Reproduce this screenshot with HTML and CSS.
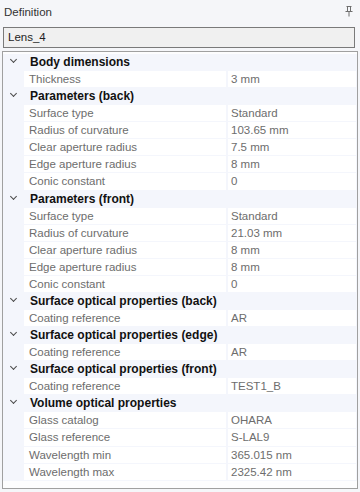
FILE: index.html
```html
<!DOCTYPE html>
<html lang="en">

<head>
  <meta charset="UTF-8">
  <meta name="viewport" content="width=device-width, initial-scale=1.0">
  <title>Definition</title>
  <link rel="stylesheet" href="styles.css">
</head>

<body>
  <main class="panel">

    <header class="panel-title">
      <span>Definition</span>
      <svg class="pin" width="8" height="11" viewBox="0 0 8 11">
        <path d="M1.5 0.5h5M2.5 0.5v5M5.5 0.5v5M0.5 5.5h7M4 5.5v5" stroke="#6f6f6f" stroke-width="1" fill="none"/>
      </svg>
    </header>

    <div class="namebox">Lens_4</div>

    <section class="grid">

      <div class="cat"><span class="chev"></span>Body dimensions</div>
      <div class="prop"><span class="name">Thickness</span><span class="val">3 mm</span></div>

      <div class="cat"><span class="chev"></span>Parameters (back)</div>
      <div class="prop"><span class="name">Surface type</span><span class="val">Standard</span></div>
      <div class="prop"><span class="name">Radius of curvature</span><span class="val">103.65 mm</span></div>
      <div class="prop"><span class="name">Clear aperture radius</span><span class="val">7.5 mm</span></div>
      <div class="prop"><span class="name">Edge aperture radius</span><span class="val">8 mm</span></div>
      <div class="prop"><span class="name">Conic constant</span><span class="val">0</span></div>

      <div class="cat"><span class="chev"></span>Parameters (front)</div>
      <div class="prop"><span class="name">Surface type</span><span class="val">Standard</span></div>
      <div class="prop"><span class="name">Radius of curvature</span><span class="val">21.03 mm</span></div>
      <div class="prop"><span class="name">Clear aperture radius</span><span class="val">8 mm</span></div>
      <div class="prop"><span class="name">Edge aperture radius</span><span class="val">8 mm</span></div>
      <div class="prop"><span class="name">Conic constant</span><span class="val">0</span></div>

      <div class="cat"><span class="chev"></span>Surface optical properties (back)</div>
      <div class="prop"><span class="name">Coating reference</span><span class="val">AR</span></div>

      <div class="cat"><span class="chev"></span>Surface optical properties (edge)</div>
      <div class="prop"><span class="name">Coating reference</span><span class="val">AR</span></div>

      <div class="cat"><span class="chev"></span>Surface optical properties (front)</div>
      <div class="prop"><span class="name">Coating reference</span><span class="val">TEST1_B</span></div>

      <div class="cat"><span class="chev"></span>Volume optical properties</div>
      <div class="prop"><span class="name">Glass catalog</span><span class="val">OHARA</span></div>
      <div class="prop"><span class="name">Glass reference</span><span class="val">S-LAL9</span></div>
      <div class="prop"><span class="name">Wavelength min</span><span class="val">365.015 nm</span></div>
      <div class="prop"><span class="name">Wavelength max</span><span class="val">2325.42 nm</span></div>

    </section>

  </main>
</body>

</html>
```

FILE: styles.css
```css
:root {
  --lav: #f4f6fc;
  --text: #6d6d6d;
}

* {
  box-sizing: border-box;
  font-family: 'Liberation Sans', Arial, sans-serif;
}

body {
  margin: 0;
  background: #f5f6f9;
}

.panel {
  width: 360px;
  height: 492px;
  display: flex;
  flex-direction: column;
}

.panel-title {
  height: 25px;
  display: flex;
  align-items: center;
  justify-content: space-between;
  padding: 0 7px 1px 4px;
  font-size: 11.5px;
  color: #333;
}

.pin {
  margin-top: -1px;
}

.namebox {
  margin: 2px 5px 0 3px;
  height: 21px;
  border: 1px solid #7a7a7a;
  background: #f0f0f0;
  font-size: 11.5px;
  color: #1e1e1e;
  padding: 3px 4px 0;
}

.grid {
  margin: 3px 2px 3px 2px;
  flex: 1;
  border: 1px solid #a0a0a0;
  background: #fdfdfe;
  padding-top: 2px;
  display: flex;
  flex-direction: column;
}

.cat {
  height: 17px;
  flex-shrink: 0;
  background: var(--lav);
  display: flex;
  align-items: center;
  font-size: 12px;
  font-weight: bold;
  color: #111;
  padding-bottom: 1px;
}

.chev {
  width: 27px;
  height: 8px;
  position: relative;
}

.chev::before {
  content: "";
  position: absolute;
  left: 8px;
  top: -1px;
  width: 4px;
  height: 4px;
  border-right: 1.4px solid #4a4a4a;
  border-bottom: 1.4px solid #4a4a4a;
  transform: rotate(45deg);
}

.prop {
  height: 17.1px;
  flex-shrink: 0;
  display: grid;
  grid-template-columns: 202px 1fr;
  column-gap: 2px;
  padding: 0 1px 1px 21px;
  background: var(--lav);
  font-size: 11.5px;
  color: var(--text);
}

.name,
.val {
  background: #fff;
  line-height: 16px;
}

.name {
  padding-left: 5px;
}

.val {
  padding-left: 3px;
}
```
